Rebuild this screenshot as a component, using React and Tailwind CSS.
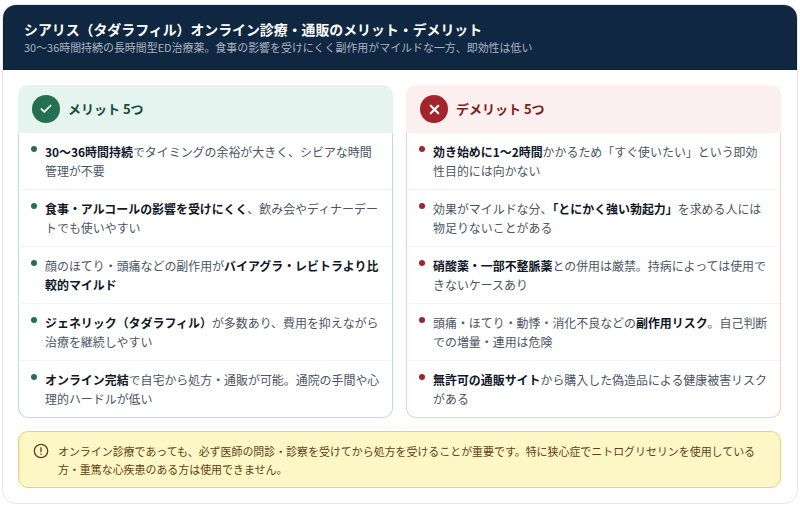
import React from "react";

const B = ({ children }) => <b className="font-bold text-[#111827]">{children}</b>;

const merits = [
  [<B key="a">30〜36時間持続</B>, "でタイミングの余裕が大きく、シビアな時間管理が不要"],
  [<B key="a">食事・アルコールの影響を受けにくく</B>, "、飲み会やディナーデートでも使いやすい"],
  ["顔のほてり・頭痛などの副作用が", <B key="a">バイアグラ・レビトラより比較的マイルド</B>],
  [<B key="a">ジェネリック（タダラフィル）</B>, "が多数あり、費用を抑えながら治療を継続しやすい"],
  [<B key="a">オンライン完結</B>, "で自宅から処方・通販が可能。通院の手間や心理的ハードルが低い"],
];

const demerits = [
  [<B key="a">効き始めに1〜2時間</B>, "かかるため「すぐ使いたい」という即効性目的には向かない"],
  ["効果がマイルドな分、", <B key="a">「とにかく強い勃起力」</B>, "を求める人には物足りないことがある"],
  [<B key="a">硝酸薬・一部不整脈薬</B>, "との併用は厳禁。持病によっては使用できないケースあり"],
  ["頭痛・ほてり・動悸・消化不良などの", <B key="a">副作用リスク</B>, "。自己判断での増量・連用は危険"],
  [<B key="a">無許可の通販サイト</B>, "から購入した偽造品による健康被害リスクがある"],
];

function Rows({ items, dot, border }) {
  return (
    <ul className={`flex flex-col border-x border-b rounded-b-[10px] ${border}`}>
      {items.map((content, i) => (
        <li key={i} className="flex gap-[8px] pl-[12px] pr-[11.5px] py-[9px] border-b border-[#f3f4f6] last:border-b-0 text-[11.95px] leading-[19px] text-[#4b5563]">
          <span className={`mt-[4px] w-[6px] h-[6px] shrink-0 rounded-full ${dot}`} />
          <span className="min-w-0">{content}</span>
        </li>
      ))}
    </ul>
  );
}

export default function App() {
  return (
    <div className="p-[4px_2px] h-[508px] bg-white" style={{ fontFamily: '"Noto Sans CJK JP", "Noto Sans", sans-serif' }}>
      <div className="h-[500px] rounded-[14px] border border-[#e5e7eb] overflow-hidden bg-white flex flex-col">
        <div className="h-[65px] shrink-0 bg-[#0f2740] pl-[21px] pt-[14px]">
          <h1 className="text-[13.9px] leading-[20px] font-bold text-white">シアリス（タダラフィル）オンライン診療・通販のメリット・デメリット</h1>
          <p className="text-[10.94px] leading-[16px] text-[#a9b5c2]">30〜36時間持続の長時間型ED治療薬。食事の影響を受けにくく副作用がマイルドな一方、即効性は低い</p>
        </div>
        <div className="flex-1 pl-[15px] pr-[16px] pt-[15px] flex flex-col">
          <div className="grid grid-cols-2 gap-[13px]">
            <section>
              <div className="h-[48px] rounded-t-[10px] bg-[#e5f4ee] flex items-center gap-[8px] pl-[14px]">
                <span className="w-[28px] h-[28px] rounded-full bg-[#256f55] flex items-center justify-center">
                  <svg width="14" height="14" viewBox="0 0 24 24" fill="none" stroke="white" strokeWidth="3" strokeLinecap="round" strokeLinejoin="round"><path d="M20 6 9 17l-5-5" /></svg>
                </span>
                <span className="text-[13px] font-bold text-[#174f3c]">メリット 5つ</span>
              </div>
              <Rows items={merits} dot="bg-[#256f55]" border="border-[#b5e4d2]" />
            </section>
            <section>
              <div className="h-[48px] rounded-t-[10px] bg-[#fcefef] flex items-center gap-[8px] pl-[14px]">
                <span className="w-[28px] h-[28px] rounded-full bg-[#a3242c] flex items-center justify-center">
                  <svg width="15" height="15" viewBox="0 0 24 24" fill="none" stroke="white" strokeWidth="3.5" strokeLinecap="round" strokeLinejoin="round"><path d="M18 6 6 18M6 6l12 12" /></svg>
                </span>
                <span className="text-[13px] font-bold text-[#7f1d24]">デメリット 5つ</span>
              </div>
              <Rows items={demerits} dot="bg-[#a3242c]" border="border-[#f6ccd0]" />
            </section>
          </div>
          <div className="mt-[13px] h-[57px] rounded-[10px] border border-[#f6c977] bg-[#fdf7c5] flex gap-[9px] pl-[14px] pr-[14px] pt-[10px] text-[10.94px] leading-[18px] text-[#633f16]">
            <svg className="shrink-0 mt-[1px]" width="16" height="16" viewBox="0 0 24 24" fill="none" stroke="#633f16" strokeWidth="2" strokeLinecap="round"><circle cx="12" cy="12" r="10" /><path d="M12 7v6M12 16.5v.5" /></svg>
            <p>オンライン診療であっても、必ず医師の問診・診察を受けてから処方を受けることが重要です。特に狭心症でニトログリセリンを使用している方・重篤な心疾患のある方は使用できません。</p>
          </div>
        </div>
      </div>
    </div>
  );
}
